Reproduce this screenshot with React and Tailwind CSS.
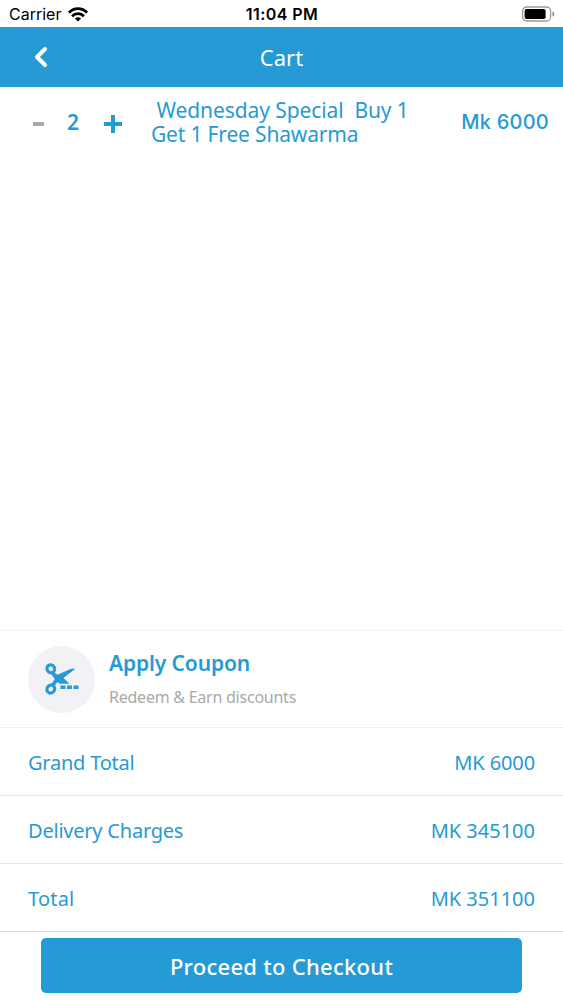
import React, { useState } from "react";

const totals = [
  { label: "Grand Total", value: "MK 6000", border: "border-[#efefef]", labelTracking: "tracking-[-0.22px]", valueTracking: "tracking-[-0.1px]" },
  { label: "Delivery Charges", value: "MK 345100", border: "border-[#e3e6e9]", labelTracking: "tracking-[-0.22px]", valueTracking: "tracking-[0px]" },
  { label: "Total", value: "MK 351100", border: "border-[#e3e6e9]", labelTracking: "tracking-[0.2px]", valueTracking: "tracking-[0px]" },
];

function StatusBar() {
  return (
    <div className="flex h-[27px] items-center justify-between pl-[9px] pr-[8px] pt-px font-['Inter',sans-serif] text-black">
      <div className="flex flex-1 items-center gap-[7px]">
        <span className="text-[16px]">Carrier</span>
        <svg width="20" height="15" viewBox="0 0 20 15" fill="none" stroke="#000" strokeWidth="2.9">
          <path d="M0.9 5.7C6 0.3 14 0.3 19.1 5.7" />
          <path d="M4.1 9.2C7.4 5.7 12.6 5.7 15.9 9.2" />
          <path d="M10 14.6L6.9 11.5C8.7 9.8 11.3 9.8 13.1 11.5Z" fill="#000" stroke="none" />
        </svg>
      </div>
      <span className="text-[16px] font-semibold tracking-[0.45px]">11:04 PM</span>
      <div className="flex flex-1 justify-end">
        <svg width="34" height="16" viewBox="0 0 34 16">
          <rect x="1.600" y="1" width="28" height="14" rx="4" fill="none" stroke="#999" strokeWidth="1.3" />
          <rect x="3.600" y="3" width="21" height="10" rx="2" fill="#000" />
          <path d="M31.500 5.5C34 6 34 10 31.500 10.5Z" fill="#888" />
        </svg>
      </div>
    </div>
  );
}

function Header() {
  return (
    <div className="grid h-[60px] grid-cols-3 items-center bg-[#269ad4] text-white">
      <button className="pl-[34px]">
        <svg width="14" height="22" viewBox="0 0 14 22" fill="none" stroke="#fff" strokeWidth="4" strokeLinecap="round" strokeLinejoin="round">
          <path d="M11 3L3 11L11 19" />
        </svg>
      </button>
      <h1 className="text-center text-[22px]">Cart</h1>
    </div>
  );
}

function ScissorsIcon() {
  return (
    <svg width="34" height="32" viewBox="0 0 34 32">
      <g fill="none" stroke="#269ad4" strokeWidth="3.2">
        <ellipse cx="5.8" cy="5.8" rx="3.7" ry="4" transform="rotate(-28 5.8 5.8)" />
        <ellipse cx="5.8" cy="26" rx="3.7" ry="4.2" transform="rotate(28 5.8 26)" />
      </g>
      <path d="M8 8.500L12.500 11.800L25 6.200C27.500 5.200 29.600 5.300 30 5.900L18.500 15L24.300 20.700H14.500L12.500 19L9 23.500L6.500 21L9.800 16L6.500 11.500Z" fill="#269ad4" />
      <path d="M15.500 22.500h5v3.500h-5zM22 22.500h5v3.500h-5zM28.500 22.500h5v3.500h-5z" fill="#269ad4" />
    </svg>
  );
}

function App() {
  const [count, setCount] = useState(2);

  return (
    <div className="flex h-[1000px] w-[563px] flex-col bg-white font-['Noto_Sans',sans-serif] text-[#269ad4]">
      <StatusBar />
      <Header />

      {/* Cart item */}
      <div className="flex flex-1 items-start pl-[33px] pr-[14px] pt-[11px]">
        <div className="flex h-[50px] w-[118px] items-center">
          <button className="w-[34px] pt-[1px]" onClick={() => setCount(Math.max(1, count - 1))}>
            <svg width="11" height="4" viewBox="0 0 11 4"><path d="M0 0h11v4H0z" fill="#a9a9a9" /></svg>
          </button>
          <span className="w-[37px] text-[21px] font-semibold">{count}</span>
          <button className="pt-[2px]" onClick={() => setCount(count + 1)}>
            <svg width="18" height="18" viewBox="0 0 18 18"><path d="M7 0h4v7h7v4h-7v7H7v-7H0V7h7z" fill="#269ad4" /></svg>
          </button>
        </div>
        <p className="flex-1 whitespace-pre text-[21px] leading-[24px]">
          <span className="block tracking-[-0.08px]">{" Wednesday Special  Buy 1"}</span>
          <span className="block tracking-[-0.17px]">Get 1 Free Shawarma</span>
        </p>
        <span className="pt-[8px] font-['Inter',sans-serif] text-[20px] font-medium leading-[32px] tracking-[0.25px]">Mk 6000</span>
      </div>

      {/* Coupon */}
      <div className="flex h-[97px] items-center border-t border-[#f0f0f0] pl-[28px]">
        <div className="flex size-[67px] items-center justify-center rounded-full bg-[#f2f1f6]">
          <ScissorsIcon />
        </div>
        <div className="ml-[14px]">
          <p className="text-[21px] font-semibold leading-[30px] tracking-[-0.12px]">Apply Coupon</p>
          <p className="mb-[2px] mt-[7px] text-[16px] leading-[24px] tracking-[-0.24px] text-[#a9a9a9]">Redeem &amp; Earn discounts</p>
        </div>
      </div>

      {totals.map((item) => (
        <div key={item.label} className={`flex h-[68px] items-center justify-between border-t px-[28px] pt-[3px] text-[20px] ${item.border}`}>
          <span className={item.labelTracking}>{item.label}</span>
          <span className={item.valueTracking}>{item.value}</span>
        </div>
      ))}

      <div className="h-[69px] border-t border-[#dce0e3] px-[41px] pt-[6px]">
        <button className="h-[55px] w-full rounded-[5px] bg-[#269ad4] pt-[2px] text-[22px] font-medium tracking-[0.28px] text-white">
          Proceed to Checkout
        </button>
      </div>
    </div>
  );
}

export default App;
